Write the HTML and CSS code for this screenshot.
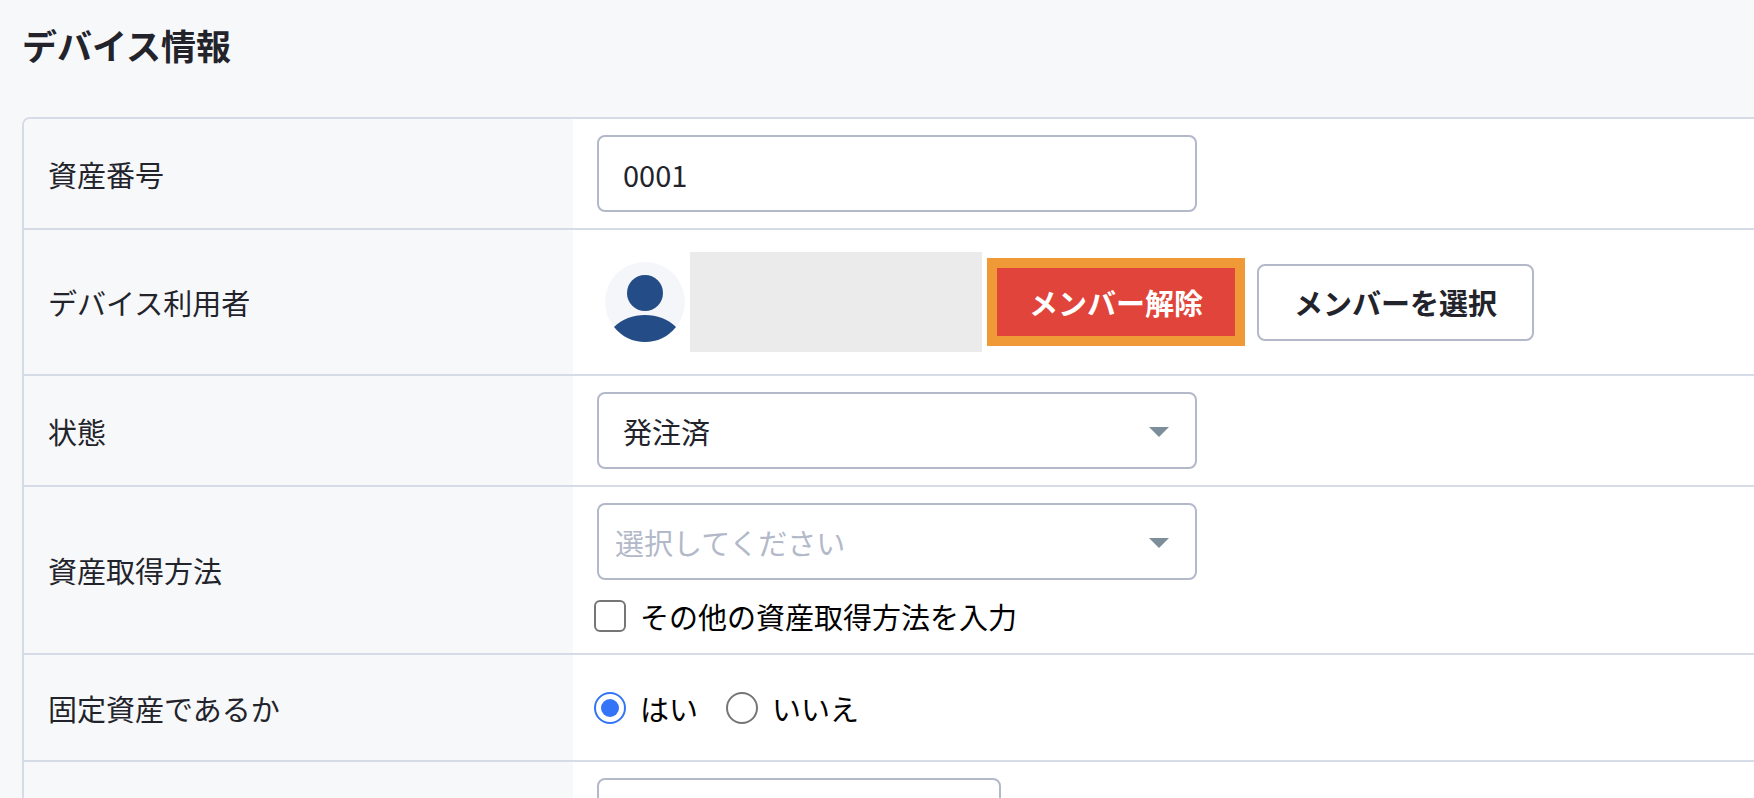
FILE: index.html
```html
<!DOCTYPE html>
<html lang="ja">
<head>
<meta charset="utf-8">
<meta name="viewport" content="width=device-width, initial-scale=1">
<title>デバイス情報</title>
<link rel="stylesheet" href="styles.css">
</head>
<body>
<main class="page">
  <h1 class="title">デバイス情報</h1>
  <form class="panel">
    <div class="row">
      <label class="row-label" for="asset-number">資産番号</label>
      <div class="row-body">
        <input class="control" id="asset-number" type="text" value="0001">
      </div>
    </div>
    <div class="row row-user">
      <div class="row-label">デバイス利用者</div>
      <div class="row-body member">
        <svg class="avatar" viewBox="0 0 80 80" aria-hidden="true">
          <circle cx="40" cy="40" r="40" fill="#f4f6fa"/>
          <circle cx="40" cy="31" r="18" fill="#244c86"/>
          <path d="M9 65C17 57 28 53 40 53s23 4 31 12C63 75 52 80 40 80S17 75 9 65Z" fill="#244c86"/>
        </svg>
        <div class="member-name"></div>
        <button class="button button-danger" type="button">メンバー解除</button>
        <button class="button button-outline" type="button">メンバーを選択</button>
      </div>
    </div>
    <div class="row">
      <label class="row-label" for="status">状態</label>
      <div class="row-body">
        <div class="select">
          <select class="control" id="status"><option>発注済</option></select>
          <svg class="select-arrow" viewBox="0 0 20 10" aria-hidden="true"><path d="M0 0h20L10 10Z"/></svg>
        </div>
      </div>
    </div>
    <div class="row">
      <label class="row-label" for="acquisition">資産取得方法</label>
      <div class="row-body">
        <div class="select">
          <select class="control control-empty" id="acquisition"><option>選択してください</option></select>
          <svg class="select-arrow" viewBox="0 0 20 10" aria-hidden="true"><path d="M0 0h20L10 10Z"/></svg>
        </div>
        <div class="choices choices-below">
          <label class="choice"><input class="checkbox" type="checkbox">その他の資産取得方法を入力</label>
        </div>
      </div>
    </div>
    <div class="row row-fixed">
      <div class="row-label">固定資産であるか</div>
      <div class="row-body">
        <div class="choices">
          <label class="choice"><input class="radio" type="radio" name="fixed" checked>はい</label>
          <label class="choice"><input class="radio" type="radio" name="fixed">いいえ</label>
        </div>
      </div>
    </div>
    <div class="row">
      <div class="row-label"></div>
      <div class="row-body">
        <input class="control control-short" type="text" aria-label="日付">
      </div>
    </div>
  </form>
</main>
</body>
</html>
```
FILE: styles.css
```css
* {
  box-sizing: border-box;
}

html {
  overflow: hidden;
}

body {
  margin: 0;
  background: #f7f8fa;
  color: #23242b;
  font-family: "Noto Sans CJK JP", sans-serif;
  font-size: 29px;
  line-height: 42px;
}

.page {
  padding: 19px 0 0 22px;
}

.title {
  margin: 0 0 46px;
  font-size: 35px;
  line-height: 52px;
  font-weight: 700;
}

.panel {
  border: 2px solid #d6dce5;
  border-right: 0;
  border-radius: 8px 0 0 8px;
  background: #fff;
  overflow: hidden;
}

.row {
  display: flex;
}

.row + .row {
  border-top: 2px solid #d6dce5;
}

.row-label {
  display: flex;
  align-items: center;
  flex: 0 0 549px;
  padding: 0 24px;
  background: #f7f8fa;
}

.row-body {
  display: flex;
  flex: 1;
  flex-direction: column;
  justify-content: center;
  align-items: flex-start;
  padding: 16px 24px;
}

.row-user {
  min-height: 146px;
}

.row-fixed {
  min-height: 107px;
}

.control {
  appearance: none;
  display: block;
  width: 600px;
  max-width: 100%;
  height: 77px;
  margin: 0;
  padding: 0 24px;
  border: 2px solid #b3b9c9;
  border-radius: 8px;
  background: #fff;
  color: inherit;
  font: inherit;
}

.control-empty {
  padding: 0 16px;
  color: #b3b9c9;
}

.control-short {
  width: 404px;
}

.select {
  position: relative;
  max-width: 100%;
}

.select-arrow {
  position: absolute;
  top: 35px;
  right: 28px;
  width: 20px;
  height: 10px;
  fill: #7b8e9a;
  pointer-events: none;
}

.member {
  flex-direction: row;
  justify-content: flex-start;
  align-items: center;
  padding: 0 32px;
}

.avatar {
  flex: none;
  width: 80px;
  height: 80px;
}

.member-name {
  width: 292px;
  height: 100px;
  margin: 0 5px;
  background: #ebebeb;
}

.button {
  margin: 0;
  font: inherit;
  font-weight: 700;
  white-space: nowrap;
}

.button-danger {
  height: 88px;
  padding: 0 32px;
  border: 10px solid #f09937;
  background: #e0443a;
  color: #fff;
}

.button-outline {
  height: 77px;
  margin-left: 12px;
  padding: 0 35px;
  border: 2px solid #b3b9c9;
  border-radius: 8px;
  background: #fff;
  color: inherit;
}

.choices {
  display: flex;
  gap: 28px;
  margin-left: -3px;
  color: #000;
}

.choices-below {
  margin-top: 15px;
}

.choice {
  display: flex;
  align-items: center;
  gap: 14px;
}

.checkbox,
.radio {
  appearance: none;
  flex: none;
  width: 32px;
  height: 32px;
  margin: 0;
  border: 2px solid #767676;
  background: #fff;
}

.checkbox {
  border-radius: 6px;
}

.radio {
  display: grid;
  place-items: center;
  border-radius: 50%;
}

.radio:checked {
  border-color: #3375f6;
}

.radio:checked::before {
  content: "";
  width: 18px;
  height: 18px;
  border-radius: 50%;
  background: #3375f6;
}
```
